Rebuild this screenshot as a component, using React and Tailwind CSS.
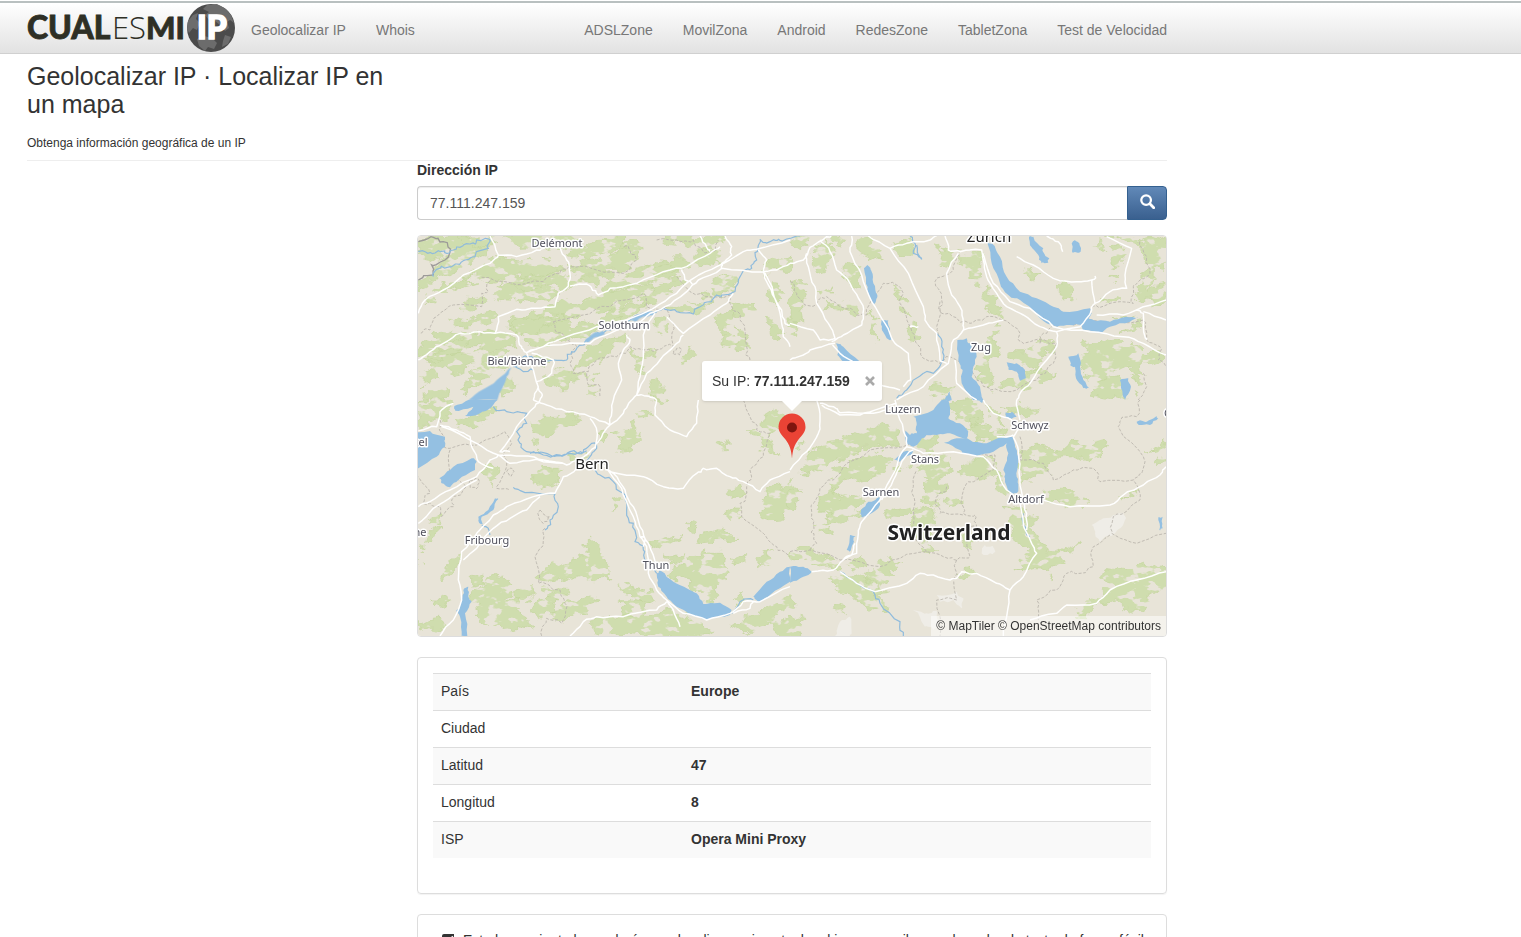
import React from "react";

/* ---------- Map data: each sheet is drawn in its own 1140 x 720 grid ---------- */

const SHEETS = [
  {
    x: 410,
    y: 160,
    forest: [
      "25,245 60,228 130,225 190,228 240,240 235,285 190,300 150,325 105,345 60,370 25,395 25,365 75,320 110,290 60,300 25,285",
      "150,225 235,228 260,250 215,262 160,250",
      "280,228 420,228 520,236 470,262 400,258 330,262",
      "480,262 560,236 640,232 650,262 600,282 540,300 480,290",
      "655,240 700,250 670,310 640,330 590,330 560,345 500,330 470,320 560,300 620,285",
      "250,290 330,300 420,300 460,330 400,350 330,345 290,365 220,352 180,345 150,362 190,325",
      "60,400 100,365 160,352 200,365 130,395 80,420 45,425",
      "300,362 380,345 470,350 520,360 470,385 400,375 340,388 270,380",
      "280,390 340,370 400,378 450,400 400,420 330,430 260,425 240,405",
      "170,410 240,400 250,425 190,450 150,440",
      "500,345 600,335 660,350 600,362 560,375 500,360",
      "620,350 700,320 780,318 810,335 720,370 640,385 590,400 570,385",
      "460,420 550,410 640,390 720,375 740,395 660,430 590,450 500,470 420,490 390,510 320,515 290,500 330,470 400,455",
      "740,300 800,290 860,300 820,325 760,335 720,370 700,345",
      "760,228 850,232 940,228 945,250 880,262 800,250 760,245",
      "880,262 950,255 930,300 880,320 850,300",
      "740,380 810,345 840,360 780,400 740,425 700,440 690,415",
      "330,480 400,470 470,470 480,500 560,490 640,470 640,500 560,520 480,530 420,545 370,560 340,545 340,515 280,505",
      "590,460 680,430 710,440 660,475 600,500 560,495",
      "120,480 190,470 260,465 220,500 150,500 100,510",
      "40,550 120,520 200,510 170,550 100,570 50,590 25,600 25,575",
      "170,520 240,510 300,530 320,560 250,570 190,560 150,580 60,610 40,600",
      "60,610 140,580 250,575 300,580 250,600 180,615 120,640 75,630",
      "180,630 250,620 290,615 250,650 190,680 150,690 170,660",
      "30,640 85,625 90,655 60,670 30,680",
      "30,700 90,680 120,690 100,720 25,720",
      "270,660 310,650 315,690 280,710 260,690",
      "380,590 420,580 400,620",
      "540,560 590,540 640,520 660,535 600,575 580,600 530,620 500,635 510,600",
      "410,640 450,625 520,640 570,630 560,665 500,660 470,690 410,670",
      "770,440 850,430 880,400 910,410 880,450 820,455",
      "905,370 940,345 975,360 970,400 930,405",
      "1060,310 1140,290 1140,340 1090,330 1060,345",
      "925,460 970,450 980,490 950,510 980,540 960,565 935,560 940,520 920,490",
      "975,500 1020,520 1015,570 980,560",
      "960,425 1010,430 1040,450 1000,475 970,455",
      "1060,480 1090,470 1110,500 1130,520 1090,530",
      "1070,380 1110,370 1120,400 1095,450 1080,420",
      "740,475 770,470 775,510 750,520 735,500",
      "815,590 850,565 850,590 820,610",
      "660,570 700,590 740,570 740,590 705,610 690,650 680,610",
      "740,650 765,690 770,720 720,700 720,670",
      "535,675 565,690 550,715 530,705",
    ],
    water: [
      "305,622 290,650 262,720 175,720 215,690 260,660",
      "660,480 690,462 735,457 730,465 700,470 680,484",
      "525,540 550,520 580,512 585,522 550,534 530,548",
    ],
    rivers: [
      "25,275 60,278 85,272 110,280 130,270 150,262 180,252 200,240 240,240 235,265 195,290 165,300 140,312 120,320 80,328 70,350",
      "1140,235 1105,238 1080,245 1050,238 1044,262 1040,300 1025,325 1000,332 985,360 975,395 940,405 920,405 905,425 870,440 850,462 800,455 760,445 730,458 690,465 660,480 620,505 580,518 545,530 525,545 505,560 485,575 470,600 430,600 370,595",
      "370,595 340,590 310,620 340,635 370,630",
    ],
    roads: [
      "265,285 320,290 380,270 410,258 450,262 470,300 480,340 475,378 445,400 435,440 380,445 320,448 265,470 255,520 320,525 335,560 350,578",
      "25,600 60,575 100,550 150,520 210,515 255,520",
      "25,460 45,420 100,390 160,345 240,310 265,285 240,228",
      "350,578 430,555 540,550 600,520 680,490 720,460 765,440 830,395 865,360 935,325 1060,335 1100,330 1140,310",
      "350,578 400,560 470,530 560,500 650,480 730,445 800,400 850,355 920,320 1000,275 1040,268 1140,240",
      "480,378 530,372 545,385 565,405 600,385 680,370 760,335 830,320 900,280 930,260",
      "815,328 825,360 850,375",
      "945,228 965,260 965,285 935,310 935,325",
      "1045,270 1070,300 1060,330 1090,400 1115,450 1125,490 1140,495",
      "1060,335 1075,375 1100,430 1115,490 1120,530 1140,560",
      "735,460 705,510 700,570 690,650 680,705 665,720",
      "680,705 710,708 740,720",
      "770,470 820,520 900,465 950,430 970,400",
      "820,525 800,550 750,600 710,640 680,705",
      "350,578 370,630 385,680 370,720",
      "365,580 430,600 425,640 380,665 395,700 390,720",
      "610,720 635,660 625,610 640,570 660,540 650,525",
      "870,228 890,262 900,275",
    ],
    borders: [
      "215,352 300,368 400,365 450,340 480,320 560,330 640,340 680,300 660,270 640,260",
      "240,362 235,395 215,400 215,440 130,435 80,470 60,510 30,520",
      "430,485 520,465 600,440 700,400 710,440 765,440 790,490 790,560 740,570 700,570 660,560 620,590 560,600 535,635 490,640 480,610 500,560 470,540 435,510 430,485",
      "800,350 840,395 900,410 960,405 965,440 990,480 1010,560 1020,600",
      "530,640 540,680 570,680 570,710",
      "790,580 800,565 815,570 810,585 790,580",
      "740,240 800,240 850,240 880,275 920,270 925,240",
    ],
    frontier: ["25,245 70,232 100,245 120,275 105,300 65,315 70,345 25,360"],
  },
  {
    x: 790,
    y: 160,
    forest: [
      "0,228 60,230 60,260 20,270 0,262",
      "75,262 105,240 130,265 110,325 75,330 65,300",
      "120,235 150,228 170,232 150,262",
      "200,245 235,235 265,262 270,300 235,290 205,270",
      "160,315 215,315 212,390 180,365 155,340",
      "310,245 355,235 375,270 345,290 320,275",
      "440,245 465,270 485,300 460,320 440,310",
      "505,270 575,280 580,340 570,385 540,365 530,320 505,310",
      "590,375 620,410 635,470 600,450 580,410",
      "0,370 45,365 50,400 40,480 0,485",
      "85,390 125,372 130,395 100,405",
      "110,420 180,425 200,440 195,470 150,450 110,445",
      "240,450 260,480 265,545 240,520",
      "305,370 340,400 350,450 360,475 330,450",
      "355,490 385,495 375,545 355,530",
      "0,490 20,500 20,525 0,528",
      "705,330 725,315 750,340 720,365",
      "800,375 825,365 850,390 850,420 805,400",
      "910,250 940,240 945,275 905,270",
      "960,310 985,250 1005,262 1000,300 975,320",
      "950,230 1030,228 1060,245 1128,228 1128,330 1090,330 1070,400 1128,370 1128,425 1080,420 1030,420 1045,380 1050,340 1075,310 1055,270 1010,245",
      "930,420 990,400 1000,415 950,430",
      "960,475 1040,455 1020,475 970,480",
      "960,355 985,345 980,370",
      "570,590 620,480 640,500 610,520 625,590 600,600 610,650 590,680 560,660",
      "650,575 740,550 790,545 800,560 750,600 740,635 700,610 650,600",
      "610,690 660,660 750,625 800,640 750,680 700,690",
      "870,545 930,550 990,535 1050,560 1128,590 1110,610 1060,600 1070,650 1010,620 960,640 900,680 870,620 890,580",
      "900,660 960,650 1000,660 1010,720 950,715 905,700",
      "1020,640 1060,680 1040,700",
      "420,710 460,670 490,680 470,720",
      "1030,490 1055,480 1050,500 990,520",
    ],
    water: [
      "222,325 232,315 243,330 250,370 262,405 250,435 235,400 228,360",
      "275,480 295,480 300,515 308,540 290,535 275,505",
      "138,550 160,560 210,605 160,605 142,585",
      "592,248 605,250 630,290 650,350 690,395 740,415 790,440 820,455 900,445 905,460 880,495 840,495 800,500 770,490 740,460 690,420 655,405 630,370 605,310",
      "870,495 885,475 910,480 960,485 1010,470 1045,472 1020,485 960,500 930,520 880,510",
      "717,230 730,230 760,265 765,285 778,295 775,308 755,310 745,285 725,262",
      "845,250 855,240 868,250 872,275 848,278",
      "502,540 530,535 540,550 560,590 550,620 545,650 570,680 580,720 550,720 515,670 518,630 505,600",
      "650,607 680,610 705,630 708,655 690,662 680,635 655,628",
      "835,590 865,580 870,620 880,660 898,685 880,685 858,655 855,620 840,615",
      "990,660 1015,655 1023,680 1005,720 998,705",
      "465,720 480,695 485,720",
    ],
    rivers: [
      "0,235 30,228",
      "360,228 375,250 370,280 395,298 380,255",
      "440,520 455,560 460,600 430,640 400,640 350,690 320,715",
    ],
    roads: [
      "0,310 40,300 60,262 110,230 125,228",
      "50,280 55,320 75,380 80,430 115,490 135,535 90,540 70,510 0,490",
      "90,240 120,275 140,330 180,370 215,430 220,470 215,495 160,525 125,545",
      "135,550 60,570 40,585 0,600",
      "185,228 180,275 215,345 245,425 285,490 315,550 355,580 362,660 340,680",
      "235,228 300,265 355,340 400,440 405,480 440,520 450,600 470,610",
      "300,265 350,250 380,245 420,240 440,228",
      "465,228 475,270 510,275 575,270 580,300 590,350 620,400 650,440 700,465 750,500 800,515 870,500 905,450 915,430",
      "505,280 470,340 480,390 510,440 520,490 520,510 485,550 475,610 400,680 320,720",
      "495,600 500,670 560,720",
      "520,510 580,495 640,480",
      "580,280 610,370 660,425 720,445 790,500 900,515 1000,530 1060,550 1128,585",
      "680,290 730,315 790,355 860,365 905,360 915,430 960,395 1010,385 1005,345 1025,265 950,230",
      "905,365 915,348",
      "770,228 805,245 818,275",
      "920,465 1000,465 1060,440 1128,420",
      "1040,450 1060,460 1065,530 1070,540",
      "1060,455 1128,480",
      "800,515 800,560 770,600 720,670 690,700 680,720",
      "125,550 150,580 200,610 260,670 330,690",
      "360,500 385,500",
    ],
    borders: [
      "0,365 20,400 45,435 80,430 110,410 150,440 200,465 230,465 245,415 280,370 320,375 340,400 330,430 360,500 375,540 400,595 450,610 480,590 545,630 560,660 600,690 680,690 740,660 790,610 800,550 760,540 700,550 690,520 640,480 590,470 540,490 490,470 455,460 455,420 435,365 490,330 510,280",
      "450,425 440,500 445,530",
      "750,550 760,520 800,500 870,490 905,480 980,485 1060,480 1070,540 1110,560 1105,600 1128,620",
      "905,440 960,430 1030,430 1030,380 1050,360 1080,340 1070,290 1050,240",
      "1060,640 1070,680 1045,720",
    ],
    frontier: [],
  },
  {
    x: 410,
    y: 400,
    forest: [
      "25,5 70,0 125,0 120,15 80,60 60,75 25,85",
      "130,60 210,50 255,10 250,30 210,70 170,80",
      "365,70 400,50 470,45 515,65 440,85 400,105 365,100",
      "365,120 390,120 385,150 365,145",
      "560,95 585,90 585,125 560,125",
      "600,95 670,65 690,100 690,125 660,150 625,150 640,120",
      "680,35 725,30 730,45 690,55",
      "745,0 765,5 750,20",
      "475,165 530,155 525,180 480,180",
      "222,200 262,200 265,235 245,260 222,225",
      "360,230 380,205 450,205 450,240 410,260 370,245",
      "605,295 635,290 635,310 615,335",
      "920,130 955,120 955,150 930,145",
      "1010,90 1050,80 1090,30 1120,40 1110,90 1080,100 1080,140 1110,160 1050,150 1060,105 1020,105",
      "955,265 995,255 1000,285 970,295 955,280",
      "1045,340 1070,290 1110,260 1150,235 1170,270 1140,310 1120,350 1060,360",
      "830,375 860,355 860,390 835,390",
      "950,335 995,325 990,350 940,345",
      "715,430 750,410 820,405 810,425 740,440",
      "860,430 880,400 940,390 985,405 950,425 900,435",
      "765,465 830,455 815,480 780,480",
      "380,540 410,505 450,490 490,470 530,465 515,430 540,420 580,460 600,500 605,540 550,545 470,535 420,545 385,545",
      "770,520 800,495 850,470 900,460 940,465 945,510 920,560 895,615 850,560 800,540",
      "960,480 1010,460 1010,490 970,500",
      "1035,470 1090,445 1090,490 1045,500",
      "180,530 220,525 225,550 185,560",
      "210,560 240,540 300,535 305,570 290,600 330,590 320,630 350,660 370,690 320,680 290,690 240,685 200,650 215,620 190,610",
      "310,575 350,560 370,580 330,600",
      "395,560 480,565 440,600 410,590",
      "370,600 420,585 450,600 430,640 380,650",
      "470,610 540,585 570,600 540,640 490,640 470,660 420,640",
      "60,600 100,585 125,600 90,625 60,620",
      "30,665 80,655 105,680 70,690",
      "630,555 670,550 690,575 730,570 735,605 690,600 640,580",
      "625,605 690,600 730,615 690,640 640,640",
      "560,655 620,655 700,640 780,625 850,660 910,690 880,708 560,708 540,670",
      "970,600 1000,575 1010,590 990,610",
      "960,680 1010,640 1050,625 1100,600 1150,585 1160,620 1100,650 1060,680 1000,700",
      "1080,660 1140,645 1190,650 1180,690 1130,708 1090,690",
      "60,355 95,345 90,370 60,370",
      "25,430 60,390 95,385 70,425 30,455",
      "25,480 45,490 40,515 25,505",
      "95,540 130,480 155,460 140,500 105,540",
    ],
    water: [
      "175,0 262,0 240,25 210,40 165,48 190,20 135,32 133,18",
      "0,95 60,93 105,110 105,140 80,170 25,205 0,205",
      "88,235 130,200 185,175 200,185 195,210 145,240 120,262 95,250",
      "740,520 752,512 790,545 830,565 860,580 880,612 930,608 965,630 960,645 890,660 840,645 800,620 770,590 745,560",
      "1030,590 1070,545 1110,515 1140,500 1140,545 1080,585 1045,605",
      "160,570 175,560 175,590 185,605 165,640 172,708 155,708 150,650 140,630 155,600",
      "255,295 265,297 250,330 215,350 218,372 208,370 205,350 235,330",
    ],
    rivers: [
      "250,20 290,35 350,40 350,70 320,95 330,130 350,155 400,165 450,165 480,155 520,155 545,130 560,145 540,170 530,200 570,225 610,245 640,280 650,330 670,370 675,425 700,450 715,485 740,520",
      "360,160 400,158 440,168 480,160 530,152",
      "310,262 345,278 435,282 445,320 420,360 405,390",
      "215,375 235,385 240,405",
      "965,640 990,605 1030,600",
    ],
    roads: [
      "25,92 80,80 90,35 130,10",
      "90,75 140,90 180,110 190,150 205,185 250,205",
      "25,320 60,305 120,270 200,230 240,180 265,165 200,130 95,80",
      "265,165 340,168 400,180 470,195 500,180 540,155 565,125 600,75 640,40 665,0",
      "600,75 540,50 470,35 410,15 370,0",
      "265,165 300,190 380,178 460,190",
      "300,155 270,155 320,80 375,20 390,0",
      "25,370 70,325 130,285 200,240",
      "555,145 560,90 540,55",
      "610,0 605,40 600,75",
      "500,205 460,230 435,280 370,290 290,320 250,345 200,400 155,455 145,540 155,600 130,660 90,708",
      "160,480 200,445 250,385 300,355 350,330 390,290",
      "560,185 610,220 645,270 670,320 690,380 715,430 745,500",
      "590,205 635,265 670,350 690,410 710,440 715,520 740,570 770,600 820,640 890,660 960,640 1000,605 1050,605 1140,560",
      "600,215 700,230 760,260 820,265 860,220 880,205 920,205 960,230 1000,245 1050,275 1080,240 1140,215",
      "740,0 735,45 780,90 830,110 860,70 865,0",
      "770,605 740,630 640,650 560,650 520,665 480,708",
      "770,600 790,630 810,680",
      "690,410 705,415 700,440",
      "970,640 1020,625 1030,605",
    ],
    borders: [
      "90,60 100,130 60,135 25,120",
      "60,135 120,145 200,135 285,95 305,130 280,160 285,215 260,265 300,270",
      "120,150 120,220 170,260 125,300 130,320 95,350 90,320 40,310 60,280 25,230",
      "290,215 305,205 312,215 300,228 290,215",
      "180,240 200,235 205,260 180,262 180,240",
      "405,385 400,420 375,470 385,550 450,570 465,610 455,670 410,655 395,708",
      "390,330 420,350 400,370 385,345 390,330",
      "1000,0 1020,50 1040,90 1080,100 1060,170 1020,210 1010,260 990,310 1005,360 1060,400 1100,440 1140,470",
    ],
    frontier: [],
  },
  {
    x: 790,
    y: 400,
    forest: [
      "30,215 70,150 110,125 170,110 240,80 265,75 330,95 325,130 250,140 200,155 160,180 110,190 80,215 50,225",
      "130,215 180,175 280,150 300,185 260,230 190,230 130,285",
      "380,130 440,110 450,125 410,160 380,150",
      "520,80 560,60 600,95 650,90 640,115 560,120",
      "470,20 520,0 560,10 580,60 540,70 500,50",
      "590,10 630,35 640,80 600,60",
      "680,200 690,150 740,130 790,160 840,120 880,130 950,130 930,170 890,190 850,170 800,180 770,205 790,240 740,220 690,250",
      "320,200 370,180 360,210 325,215",
      "380,210 430,170 480,165 475,215 450,230 470,270 440,320 420,310 400,290 410,250",
      "490,215 540,180 620,175 640,230 600,225 560,240 520,230",
      "620,230 650,235 660,290 620,280",
      "85,290 140,265 150,295 220,290 190,330 220,330 150,370 110,380 120,350 90,340",
      "70,380 110,370 130,400 85,395",
      "300,330 360,320 340,350 280,345",
      "370,330 410,320 440,360 390,430 440,460 400,450 370,410",
      "460,300 490,285 510,310 470,310",
      "510,400 550,410 545,450 520,445",
      "640,320 690,320 700,350 740,350 730,390 745,430 770,445 820,490 780,510 785,540 730,500 680,510 715,480 720,440 670,420 665,360",
      "760,270 830,255 850,285 900,300 880,320 830,320 790,305",
      "800,450 865,430 860,445 810,460",
      "980,290 1045,262 1040,275 990,300",
      "0,450 80,455 150,480 150,500 90,500 0,480",
      "160,490 220,470 230,495 190,510",
      "230,510 270,480 335,485 300,510 290,550 250,560",
      "115,530 200,525 250,550 300,575 255,590 300,620 240,640 200,600 140,570",
      "130,625 165,615 160,635",
      "500,520 540,505 560,515 510,535",
      "945,515 1040,510 1060,490 1128,505 1128,570 1070,590 1080,610 1030,640 980,600 920,605 880,650 855,640 880,610 940,580 960,550",
      "1070,160 1128,120 1128,190 1100,195 1105,165",
      "0,270 20,275 20,320 0,330",
      "20,140 45,125 30,155",
      "630,20 690,10 750,25 745,45 700,60",
    ],
    water: [
      "370,50 430,30 455,0 475,0 480,30 475,55 510,70 535,95 530,115 480,100 440,105 410,105 385,130 370,140 350,135 345,90 360,105 380,100 380,75",
      "462,128 500,115 540,120 590,130 640,112 670,112 675,140 685,180 680,230 685,265 680,280 660,280 645,235 640,210 655,160 650,130 610,155 560,168 520,160 510,150",
      "312,180 340,155 375,150 360,165 330,185",
      "213,330 235,305 270,290 270,315 235,345 215,352",
      "170,450 180,405 197,408 190,430 178,455",
      "645,38 665,35 680,50 650,55",
      "1040,65 1070,65 1100,48 1105,55 1080,75 1045,75",
      "1105,352 1118,350 1118,385 1108,390",
      "0,500 40,500 65,515 40,530 0,548",
      "565,0 580,0 575,8",
    ],
    rivers: [
      "150,515 200,550 250,575 270,610 330,665 340,708",
      "700,340 705,380 720,410",
    ],
    roads: [
      "80,0 90,50 85,100 50,155 0,210",
      "95,15 150,45 210,45 270,25 320,10",
      "90,10 130,20 150,38 250,40 310,20",
      "315,0 330,60 345,105 350,140 325,180 300,240 270,300 215,365 205,400 200,460 160,480 130,510 65,515",
      "350,140 400,160 490,155 580,170 620,210 650,270 690,310 700,370 725,430 740,460 700,530 660,570 650,650 640,708",
      "370,150 335,185 310,240 275,300",
      "580,0 610,40 665,60 690,85 670,112 685,150 690,240 700,300 710,340 710,390",
      "690,60 680,0",
      "620,110 670,105",
      "760,300 840,320 960,315 1000,285 1060,255 1110,225 1128,200",
      "255,575 350,550 390,520 430,525 480,540 500,535 515,515 560,520 620,550 660,570",
      "150,515 200,550 255,575",
      "720,660 800,640 830,615 920,610 960,570 1040,540 1128,515",
      "160,480 185,465 195,430",
    ],
    borders: [
      "1050,0 1040,50 990,65 985,80 1060,170 1055,220 1030,240",
      "60,450 80,430 65,400 70,370 65,335 90,265 130,240 170,190 240,150 340,140 420,90 520,85 530,150 615,165 610,210 560,240 530,250 515,300 520,340 555,345 560,380 530,395 540,470 500,480 460,470 410,455 330,475 270,500 150,480 60,450 0,455",
      "410,455 370,400 370,330 370,260 380,210",
      "470,260 435,310 450,340 520,345",
      "690,110 690,180 760,190 790,240 850,210 910,205 930,245 1030,240 1050,300 1000,340 970,350 965,400 1040,430 1128,400",
      "960,405 910,440 910,500 870,520 830,520 800,570 740,600 745,660",
      "500,480 495,530 500,600 440,600 450,708",
    ],
    frontier: [],
  },
];

const PALE_ROCK = [
  "368,630 410,640 440,632 445,660 430,690 405,680",
  "440,585 500,575 520,600 515,625 490,600 450,605",
  "135,708 150,665 180,650 185,700 180,708",
  "575,460 585,435 610,440 610,460 590,465",
  "905,375 940,355 975,345 1000,335 1005,360 975,400 930,425 915,400",
];

const TOWNS = [
  { name: "Delémont", x: 557, y: 247 },
  { name: "Solothurn", x: 624, y: 329 },
  { name: "Biel/Bienne", x: 517, y: 365 },
  { name: "Fribourg", x: 487, y: 544 },
  { name: "Thun", x: 656, y: 569 },
  { name: "Zug", x: 981, y: 351 },
  { name: "Luzern", x: 903, y: 413 },
  { name: "Schwyz", x: 1030, y: 429 },
  { name: "Stans", x: 925, y: 463 },
  { name: "Sarnen", x: 881, y: 496 },
  { name: "Altdorf", x: 1026, y: 503 },
  { name: "tel", x: 421, y: 446 },
  { name: "ne", x: 420, y: 536 },
  { name: "G", x: 1168, y: 417 },
];

/* Deterministic midpoint displacement, so outlines look like terrain. */
function outline(text, amount, closed) {
  let seed = 7;
  for (const ch of text) seed = (seed * 31 + ch.charCodeAt(0)) % 233280;
  const noise = () => {
    seed = (seed * 9301 + 49297) % 233280;
    return seed / 233280 - 0.5;
  };
  let points = text.split(" ").map((pair) => pair.split(",").map(Number));
  let reach = amount;
  for (let pass = 0; pass < 2; pass += 1) {
    const next = [];
    points.forEach((point, i) => {
      next.push(point);
      if (!closed && i === points.length - 1) return;
      const other = points[(i + 1) % points.length];
      const size = Math.hypot(other[0] - point[0], other[1] - point[1]);
      const swing = Math.min(reach, size * 0.6);
      next.push([
        (point[0] + other[0]) / 2 + noise() * swing,
        (point[1] + other[1]) / 2 + noise() * swing,
      ]);
    });
    points = next;
    reach *= 0.8;
  }
  const path = points.map(([x, y]) => `${Math.round(x)} ${Math.round(y)}`).join("L");
  return `M${path}${closed ? "Z" : ""}`;
}

const layer = (key, amount, closed) =>
  SHEETS.map((sheet) => ({
    shift: `translate(${sheet.x} ${sheet.y}) scale(0.33333)`,
    d: sheet[key].map((item) => outline(item, amount, closed)).join(""),
  }));

const LAYERS = {
  forest: layer("forest", 26, true),
  water: layer("water", 7, true),
  rivers: layer("rivers", 14, false),
  roads: layer("roads", 7, false),
  borders: layer("borders", 16, false),
  frontier: layer("frontier", 14, false),
};

function Layer({ name, ...rest }) {
  return (
    <g {...rest}>
      {LAYERS[name].map((item) => (
        <path key={item.shift} d={item.d} transform={item.shift} />
      ))}
    </g>
  );
}

function TerrainMap() {
  return (
    <svg
      viewBox="418 236 748 400"
      preserveAspectRatio="xMidYMid slice"
      className="block h-[400px] w-full bg-[#e8e4d8]"
      role="img"
      aria-label="Mapa"
    >
      <defs>
        <filter
          id="woodland"
          filterUnits="userSpaceOnUse"
          x="418"
          y="236"
          width="748"
          height="400"
          colorInterpolationFilters="sRGB"
        >
          <feTurbulence type="fractalNoise" baseFrequency="0.07 0.12" numOctaves="3" seed="4" result="noise" />
          <feDisplacementMap
            in="SourceGraphic"
            in2="noise"
            scale="12"
            xChannelSelector="R"
            yChannelSelector="G"
            result="ragged"
          />
          <feColorMatrix
            in="noise"
            type="matrix"
            values="0 0 0 0 0  0 0 0 0 0  0 0 0 0 0  0 0 14 0 -5"
            result="clearings"
          />
          <feComposite in="ragged" in2="clearings" operator="in" />
        </filter>
      </defs>
      <g fill="#efede7" transform="translate(790 400) scale(0.33333)">
        {PALE_ROCK.map((item) => (
          <path key={item} d={outline(item, 12, true)} />
        ))}
      </g>
      <g filter="url(#woodland)">
        <Layer name="forest" fill="#cfddae" stroke="#c3d49c" strokeWidth="2" />
      </g>
      <Layer name="borders" fill="none" stroke="#b9b5ad" strokeWidth="2.6" strokeDasharray="9 5" />
      <Layer name="frontier" fill="none" stroke="#9c9a98" strokeWidth="4" />
      <Layer name="rivers" fill="none" stroke="#8fbbdc" strokeWidth="3.6" />
      <Layer name="water" fill="#94c0e2" />
      <Layer name="roads" fill="none" stroke="#ffffff" strokeWidth="4.4" strokeLinejoin="round" />
      <g
        textAnchor="middle"
        fontFamily="'Noto Sans', sans-serif"
        stroke="#ffffff"
        strokeWidth="3"
        strokeLinejoin="round"
        paintOrder="stroke"
      >
        <g fontSize="11" fill="#50505c">
          {TOWNS.map((town) => (
            <text key={town.name} x={town.x} y={town.y}>
              {town.name}
            </text>
          ))}
        </g>
        <g fontSize="15" fill="#222222">
          <text x="592" y="469">Bern</text>
          <text x="989" y="242">Zürich</text>
        </g>
        <text x="949" y="540" fontSize="21" fontWeight="700" fill="#222222">
          Switzerland
        </text>
      </g>
    </svg>
  );
}

function Pin() {
  return (
    <svg width="28" height="46" viewBox="0 0 28 46" aria-hidden="true">
      <path
        d="M14 45.500C13.400 37 11.500 31.500 7.500 26.500C3.500 21.500.5 19 .5 14A13.500 13.500 0 0 1 27.500 14C27.500 19 24.500 21.500 20.500 26.500C16.500 31.500 14.600 37 14 45.500Z"
        fill="#ea4335"
      />
      <circle cx="14" cy="14.500" r="5" fill="#7f150f" />
    </svg>
  );
}

function Logo() {
  return (
    <svg width="209" height="50" viewBox="0 0 209 50" role="img" aria-label="Cual es mi IP">
      <g fill="#2e2f25">
        <g fontFamily="Lato, sans-serif" fontWeight="900" stroke="#2e2f25" strokeWidth="0.8">
          <text x="0" y="36" fontSize="32">CUAL</text>
          <text x="119" y="36" fontSize="31">MI</text>
        </g>
        <text x="85" y="36" fontFamily="'Open Sans', sans-serif" fontSize="31" fontWeight="300">
          ES
        </text>
      </g>
      <circle cx="184" cy="25" r="24" fill="#4b4b4b" />
      <g fill="#6c6c6c">
        <path d="M180 2L190 1L199 6L204 12L207 20L203 17L200 19L202 25L198 28L193 22L188 18L182 17L178 12L182 9L176 6Z" />
        <path d="M161 18L166 12L171 10L169 16L173 20L170 27L166 25L162 30L160 26Z" />
        <path d="M170 36L177 33L185 35L190 40L187 46L181 44L178 48L172 43Z" />
        <path d="M198 32L204 34L201 41L195 44L196 38Z" />
      </g>
      <text
        x="170"
        y="36"
        fontFamily="Lato, sans-serif"
        fontSize="32"
        fontWeight="900"
        fill="#ffffff"
        stroke="#ffffff"
        strokeWidth="1.6"
      >
        IP
      </text>
    </svg>
  );
}

function SearchIcon() {
  return (
    <svg width="15" height="15" viewBox="0 0 14 14" fill="none" stroke="#ffffff" aria-hidden="true">
      <circle cx="5.700" cy="5.700" r="4.500" strokeWidth="2.100" />
      <path d="M9.200 9.200L12.800 12.800" strokeWidth="2.600" strokeLinecap="round" />
    </svg>
  );
}

function CheckIcon() {
  return (
    <svg width="14" height="14" viewBox="0 0 14 14" className="shrink-0" aria-hidden="true">
      <path d="M3 1H10L13 1V4V10A3 3 0 0 1 10 13H4A3 3 0 0 1 1 10V3A2 2 0 0 1 3 1Z" fill="#333333" />
      <path d="M3.500 7L6 9.500L12 3.500" fill="none" stroke="#ffffff" strokeWidth="2" />
    </svg>
  );
}

const TOOLS = ["Geolocalizar IP", "Whois"];
const SITES = ["ADSLZone", "MovilZona", "Android", "RedesZone", "TabletZona", "Test de Velocidad"];
const ROWS = [
  ["País", "Europe"],
  ["Ciudad", ""],
  ["Latitud", "47"],
  ["Longitud", "8"],
  ["ISP", "Opera Mini Proxy"],
];

function NavLinks({ items, label }) {
  return (
    <nav aria-label={label} className="flex gap-[30px]">
      {items.map((item) => (
        <a key={item} href="#" className="text-[#777777] hover:text-[#333333]">
          {item}
        </a>
      ))}
    </nav>
  );
}

export default function App() {
  return (
    <div className="min-h-screen bg-white pb-5 font-['Liberation_Sans',Arial,sans-serif] text-sm text-[#333333]">
      <div className="h-px" />
      <header className="border-t-2 border-b border-t-[#b9c0c0] border-b-[#d0d0d0] bg-linear-to-b from-white to-[#e2e2e2]">
        <div className="ml-3 flex h-[50px] max-w-[1170px] items-center justify-between px-[15px]">
          <div className="flex items-center gap-[15px]">
            <a href="#">
              <Logo />
            </a>
            <div className="pt-1">
              <NavLinks items={TOOLS} label="Herramientas" />
            </div>
          </div>
          <div className="pt-1">
            <NavLinks items={SITES} label="Sitios" />
          </div>
        </div>
      </header>

      <main className="ml-3 max-w-[1170px] px-[15px] pt-2">
        <div className="border-b border-[#eeeeee] pb-2">
          <h1 className="max-w-[360px] text-[25px] leading-7">
            Geolocalizar IP · Localizar IP en un mapa
          </h1>
          <p className="pt-4 text-xs leading-[18px]">Obtenga información geográfica de un IP</p>
        </div>

        <div className="flex flex-col gap-5 pl-[390px]">
          <div>
            <label htmlFor="ip" className="mb-[7px] block leading-[18px] font-bold">
              Dirección IP
            </label>
            <form className="mb-[15px] flex h-[34px]" onSubmit={(event) => event.preventDefault()}>
              <input
                id="ip"
                type="text"
                defaultValue="77.111.247.159"
                className="min-w-0 flex-1 rounded-l border border-r-0 border-[#cccccc] px-3 text-[#555555] shadow-[inset_0_1px_1px_rgba(0,0,0,0.075)]"
              />
              <button
                type="submit"
                aria-label="Buscar"
                className="flex w-10 items-center justify-center rounded-r border border-[#34608f] bg-linear-to-b from-[#6189b8] to-[#3a608f] pb-1"
              >
                <SearchIcon />
              </button>
            </form>
            <div className="relative overflow-hidden rounded border border-[#dddddd]">
              <TerrainMap />
              <div className="absolute top-[177px] left-1/2 -translate-x-1/2">
                <Pin />
              </div>
              <div className="absolute top-[125px] left-1/2 flex h-10 w-[180px] -translate-x-1/2 items-center justify-between rounded-[3px] bg-white pr-[7px] pl-[10px] shadow-sm">
                <p>
                  Su IP: <strong>77.111.247.159</strong>
                </p>
                <button type="button" aria-label="Cerrar">
                  <svg width="10" height="10" viewBox="0 0 10 10" aria-hidden="true">
                    <path d="M1 1L9 9M9 1L1 9" stroke="#aaaaaa" strokeWidth="2.600" />
                  </svg>
                </button>
                <svg
                  width="20"
                  height="10"
                  viewBox="0 0 20 10"
                  className="absolute top-full left-20"
                  aria-hidden="true"
                >
                  <path d="M0 0H20L10 10Z" fill="#ffffff" />
                </svg>
              </div>
              <p className="absolute right-0 bottom-0 bg-white/50 px-[5px] text-xs leading-5">
                © MapTiler © OpenStreetMap contributors
              </p>
            </div>
          </div>

          <section className="rounded border border-[#dddddd] px-[15px] pt-[15px] pb-[35px] shadow-[0_1px_1px_rgba(0,0,0,0.05)]">
            <table className="w-full border-collapse">
              <tbody>
                {ROWS.map(([name, value]) => (
                  <tr key={name} className="border-t border-[#dddddd] odd:bg-[#f9f9f9]">
                    <th scope="row" className="w-[250px] px-2 pt-[7px] pb-[9px] text-left font-normal">
                      {name}
                    </th>
                    <td className="px-2 pt-[7px] pb-[9px] font-bold">{value}</td>
                  </tr>
                ))}
              </tbody>
            </table>
          </section>

          <section className="rounded border border-[#dddddd] p-[15px]">
            <p className="flex items-center gap-2 px-2 whitespace-nowrap">
              <CheckIcon />
              Esta herramienta le ayudará a geolocalizar su ip actual o el ip que escriba en el cuadro de texto de forma fácil
            </p>
          </section>
        </div>
      </main>
    </div>
  );
}
